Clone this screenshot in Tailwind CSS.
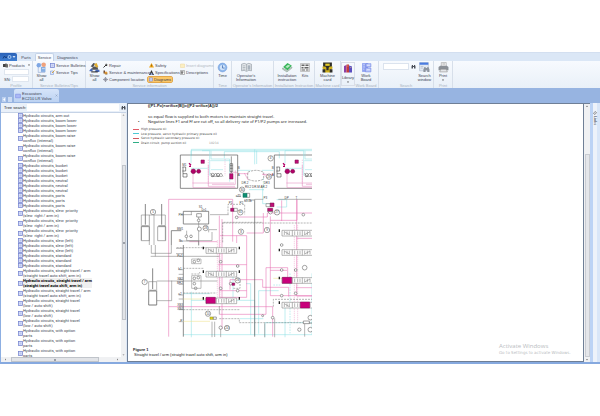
<!DOCTYPE html>
<html lang="en">
  <head>
    <meta charset="UTF-8">
    <title>EC210 LR Volvo | Service</title>
    <script src="https://cdn.jsdelivr.net/npm/@tailwindcss/browser@4"></script>
  </head>
  <body class="min-h-screen bg-white pt-[52px] font-['Liberation_Sans',Arial,sans-serif] text-[4px] leading-[5px] text-[#3c4452] overflow-hidden">

    <!-- Shared icons -->
    <svg class="hidden">
      <symbol id="doc" viewBox="0 0 10 10"><rect x="1" y="1" width="8" height="8" fill="#dfe6fb" stroke="#7482cf" stroke-width="1.5"/><path d="M3 4h4M3 6h4" stroke="#8694dd"/></symbol>
      <symbol id="bino" viewBox="0 0 10 10"><path d="M1 9V5l1-3h2v2h2V2h2l1 3v4H6V6H4v3z" fill="#4a4f58"/></symbol>
      <symbol id="excavator" viewBox="0 0 20 20"><path d="M3 8l5-6 4 1-5 6z" fill="#4d5058"/><path d="M7 8h8l2 6H5z" fill="#555"/><path d="M9 4l5-2 3 7-4 1z" fill="#e0ad32"/><path d="M1 15l4-4 2 6H1zM12 14h7v4h-8z" fill="#4668b8"/><path d="M4 18h12" stroke="#333" stroke-width="2"/></symbol>
    </svg>

    <header>
      <!-- Tabs -->
      <nav class="flex h-[9px] items-end bg-[#dbe7f6] border-t border-[#d3dff0]">
        <button class="h-[8px] w-[17px] rounded-tr-xs bg-linear-to-b from-[#2b62b8] to-[#3f7fd2] flex items-center justify-center" aria-label="Menu">
          <svg class="w-[14px] h-[6px]" viewBox="0 0 28 12"><path d="M2 9l3-5 3 4 3-4" stroke="#153d80" stroke-width="2" fill="none"/><circle cx="15" cy="6" r="3" fill="none" stroke="#a9cdf5" stroke-width="2"/><path d="M21 4h6l-3 4z" fill="#d6e7fb"/></svg>
        </button>
        <button class="h-[8px] ml-[2px] w-[14px]">Parts</button>
        <button class="h-[8px] ml-[2px] w-[19px] rounded-t-xs border border-b-0 border-[#c3d2e8] bg-[#f8fbff]">Service</button>
        <button class="h-[8px] ml-[3px] w-[21px]">Diagnostics</button>
      </nav>

      <!-- Ribbon -->
      <div class="flex h-[27px] bg-linear-to-b from-[#f7fafe] to-[#e9f0f8]">
        <section class="w-[33px] flex flex-col border-r border-[#d7dfea] pt-px">
          <button class="flex items-center gap-px pl-[3px] h-[6px]">
            <svg class="w-[5px] h-[5px]" viewBox="0 0 10 10"><path d="M0 2h6v6H0z" fill="#444"/><path d="M5 0l5 3v6H5z" fill="#6b6b6b"/></svg>
            Products
            <svg class="w-[2px] h-[2px] ml-[2px]" viewBox="0 0 4 4"><path d="M0 1h4L2 4z" fill="#555"/></svg>
          </button>
          <input type="text" aria-label="Product" class="ml-[4px] mt-px h-[6px] w-[25px] border border-[#dfe6ef] bg-white">
          <div class="flex items-center gap-[2px] pl-[4px] mt-px">
            <label for="sn" class="w-[6px]">SN:</label>
            <input id="sn" type="text" class="h-[6px] w-[17px] border border-[#dfe6ef] bg-white">
          </div>
          <div class="mt-auto text-center text-[#a9b2c0]">Profile</div>
        </section>

        <section class="w-[53px] flex flex-col border-r border-[#d7dfea] pt-px">
          <div class="flex gap-[3px] pl-[3px]">
            <button class="flex flex-col items-center w-[11px] leading-[4px]">
              <svg class="w-[11px] h-[11px] mb-px" viewBox="0 0 20 20"><path d="M4 4h9l3 3v12H4z" fill="#e4ecf9" stroke="#8fa6cf"/><circle cx="5" cy="6" r="4" fill="#7fa7e4"/><circle cx="14" cy="5" r="4" fill="#f0a27c"/><path d="M9 9h8v9H9z" fill="#86aee2"/><path d="M7 9v8M11 12h5" stroke="#fff"/></svg>
              Show<br>all
            </button>
            <div class="flex flex-col gap-[2px] pt-px">
              <button class="flex items-center gap-px whitespace-nowrap"><svg class="w-[5px] h-[5px] shrink-0"><use href="#doc"/></svg>Service Bulletins</button>
              <button class="flex items-center gap-px whitespace-nowrap"><svg class="w-[5px] h-[5px] shrink-0" viewBox="0 0 10 10"><path d="M1 2h6v7H1z" fill="#dbe6fa" stroke="#6d8bcd"/><path d="M4 6l5-5" stroke="#d9a441" stroke-width="2"/></svg>Service Tips</button>
            </div>
          </div>
          <div class="mt-auto text-center text-[#a9b2c0]">Service Bulletins/Tips</div>
        </section>

        <section class="w-[128px] flex flex-col border-r border-[#d7dfea] pt-px">
          <div class="flex pl-[3px]">
            <button class="flex flex-col items-center w-[11px] leading-[4px]">
              <svg class="w-[11px] h-[11px] mb-px"><use href="#excavator"/></svg>
              Show<br>all
            </button>
            <div class="flex flex-col gap-[2px] w-[48px] pt-px pl-[3px]">
              <button class="flex items-center gap-px whitespace-nowrap"><svg class="w-[5px] h-[5px]" viewBox="0 0 10 10"><path d="M1 9l5-5" stroke="#333" stroke-width="2"/><path d="M5 2l2-1v2h2l-1 3H5z" fill="#333"/></svg>Repair</button>
              <button class="flex items-center gap-px whitespace-nowrap"><svg class="w-[5px] h-[5px] shrink-0" viewBox="0 0 10 10"><path d="M1 1h3v6H1z" fill="#6c4a35"/><circle cx="6" cy="6" r="3" fill="#e39a35"/><path d="M5 8h4" stroke="#444"/></svg>Service &amp; maintenance</button>
              <button class="flex items-center gap-px whitespace-nowrap"><svg class="w-[5px] h-[5px] shrink-0" viewBox="0 0 10 10"><circle cx="5" cy="5" r="3" fill="none" stroke="#667"/><path d="M5 0v10M0 5h10" stroke="#667"/></svg>Component location</button>
            </div>
            <div class="flex flex-col items-start gap-[2px] w-[32px] pt-px">
              <button class="flex items-center gap-px px-px"><svg class="w-[5px] h-[5px]" viewBox="0 0 10 10"><path d="M5 0l5 9H0z" fill="#f2a81d"/><path d="M5 3v3M5 7v1" stroke="#5b3b00"/></svg>Safety</button>
              <button class="flex items-center gap-px px-px"><svg class="w-[5px] h-[5px]" viewBox="0 0 10 10"><path d="M5 0l5 10H7L5 5l-2 5H0z" fill="#333"/><path d="M2 7h6v2H2z" fill="#4a66a8"/></svg>Specifications</button>
              <button class="flex items-center gap-px px-px w-[24px] rounded-[1px] bg-[#fbc768] outline outline-[#e3a84b]"><svg class="w-[5px] h-[5px]"><use href="#doc"/></svg>Diagrams</button>
            </div>
            <div class="flex flex-col gap-[2px] pt-px">
              <button class="flex items-center gap-px whitespace-nowrap text-[#b3bac5]" disabled><svg class="w-[5px] h-[5px]" viewBox="0 0 10 10"><path d="M1 2h8v7H1z" fill="#fbeec2" stroke="#edd79a"/></svg>Insert diagrams</button>
              <button class="flex items-center gap-px whitespace-nowrap"><svg class="w-[5px] h-[5px]" viewBox="0 0 10 10"><path d="M1 1h8v8H1z" fill="#fff" stroke="#777"/><path d="M3 3h2v4H3zM6 4h2" stroke="#555" fill="#555"/></svg>Descriptions</button>
            </div>
          </div>
          <div class="mt-auto text-center text-[#a9b2c0]">Service information</div>
        </section>

        <section class="w-[18px] flex flex-col items-center border-r border-[#d7dfea] pt-px">
          <button class="flex flex-col items-center leading-[4px]">
            <svg class="w-[11px] h-[11px] mb-px" viewBox="0 0 20 20"><circle cx="10" cy="10" r="8" fill="#8bb5ea" stroke="#6e9bdb"/><circle cx="10" cy="10" r="5" fill="#cfe2f9"/><path d="M10 6v5h4" stroke="#4a74b5" stroke-width="1.5" fill="none"/></svg>
            Time
          </button>
          <div class="mt-auto text-[#a9b2c0]">Time</div>
        </section>

        <section class="w-[42px] flex flex-col border-r border-[#d7dfea] pt-px">
          <button class="flex flex-col items-center w-[28px] leading-[4px]">
            <svg class="w-[11px] h-[11px] mb-px" viewBox="0 0 20 20"><path d="M1 4q5-3 9 0q4-3 9 0v12q-5-2-9 1q-4-3-9-1z" fill="#e6e9ec" stroke="#7d8791"/><path d="M10 4v12M3 7h5M3 10h5M3 13h5" stroke="#8a949e"/><path d="M12 6h5v8h-5z" fill="#a9b3bd"/></svg>
            Operator's<br>Information
          </button>
          <div class="mt-auto text-center text-[#a9b2c0] whitespace-nowrap">Operator's Information</div>
        </section>

        <section class="w-[41px] flex flex-col border-r border-[#d7dfea] pt-px">
          <div class="flex">
            <button class="flex flex-col items-center w-[26px] leading-[4px]">
              <svg class="w-[11px] h-[11px] mb-px" viewBox="0 0 20 20"><path d="M1 13l8 5 9-7v-2l-9 6-8-4z" fill="#ccd3cf" stroke="#7f9b87"/><path d="M2 9l8-7 8 5-8 8z" fill="#39b55a"/><path d="M6 9l5-4 4 2-5 4z" fill="#b6ebc0"/></svg>
              Installation<br>instruction
            </button>
            <button class="flex flex-col items-center w-[10px] leading-[4px]">
              <svg class="w-[10px] h-[11px] mb-px" viewBox="0 0 20 20"><path d="M1 2h18v16H1z" fill="#f1f1f1" stroke="#999"/><path d="M3 4h6v3H3zM11 4h6v3h-6zM3 9h4v3H3zM9 9h8v3H9zM3 14h7v2H3zM12 14h5v2h-5z" fill="#666"/></svg>
              Kits
            </button>
          </div>
          <div class="mt-auto text-center text-[#a9b2c0] whitespace-nowrap">Installation Instruction</div>
        </section>

        <section class="w-[26px] flex flex-col items-center border-r border-[#d7dfea] pt-px">
          <button class="flex flex-col items-center leading-[4px]">
            <svg class="w-[11px] h-[11px] mb-px" viewBox="0 0 20 20"><path d="M2 1h16v7l-3 3H5L2 8z" fill="#2e2e2a"/><path d="M6 3h8v4H6z" fill="#e2cb2c"/><path d="M1 8h5l4 4 4-4h5v4l-4 3v4H5v-4l-4-3z" fill="#cdaf1c"/><path d="M1 13h5v6H1zM14 13h5v6h-5zM8 9h4v6H8z" fill="#2e2e2a"/></svg>
            Machine<br>card
          </button>
          <div class="mt-auto text-[#a9b2c0] whitespace-nowrap">Machine card</div>
        </section>

        <section class="w-[38px] flex border-r border-[#d7dfea] pt-px">
          <button class="flex flex-col items-center w-[14px] h-[24px] border border-[#d9dee8] leading-[4px]">
            <svg class="w-[10px] h-[11px] mb-[2px]" viewBox="0 0 20 20"><path d="M2 5l5-2v15H2z" fill="#8b3fa5"/><path d="M7 2h5v16H7z" fill="#c33b3b"/><path d="M12 4l6 2v12h-6z" fill="#5b4fc0"/><path d="M8 5h3M14 8h3" stroke="#f0c67a"/></svg>
            Library
            <svg class="w-[2px] h-[2px] mt-px" viewBox="0 0 4 4"><path d="M0 1h4L2 4z" fill="#555"/></svg>
          </button>
          <div class="flex flex-col items-center w-[22px]">
            <button class="flex flex-col items-center leading-[4px]">
              <svg class="w-[11px] h-[11px] mb-px" viewBox="0 0 20 20"><path d="M2 2h11v16H2z" fill="#90a3f2"/><path d="M9 3h9v6H9zM8 11h10v7H8z" fill="#b9c6fb" stroke="#6d81e0"/><path d="M4 5h3M4 9h3M4 13h2M11 6h5M11 14h5" stroke="#fff"/></svg>
              Work<br>Board
            </button>
            <div class="mt-auto text-[#a9b2c0] whitespace-nowrap">Work Board</div>
          </div>
        </section>

        <section class="w-[55px] flex flex-col border-r border-[#d7dfea] pt-px">
          <div class="flex pl-[4px]">
            <input type="text" aria-label="Search" class="h-[7px] w-[26px] mt-px border border-[#dbe3ee] bg-white">
            <button aria-label="Find" class="ml-[2px] w-[5px] h-[9px] flex items-center"><svg class="w-[5px] h-[5px]"><use href="#bino"/></svg></button>
            <button class="flex flex-col items-center w-[17px] leading-[4px]">
              <svg class="w-[11px] h-[11px] mb-px" viewBox="0 0 20 20"><path d="M1 1h16v15H1z" fill="#e3e9f2" stroke="#a5b3c9"/><path d="M1 1h16v4H1z" fill="#4a7be0"/><path d="M3 8h5M3 11h4" stroke="#9aa7ba"/><path d="M8 18v-5l2-4h2v2h3V9h2l2 4v5h-4v-3h-3v3z" fill="#8d949f"/></svg>
              Search<br>window
            </button>
          </div>
          <div class="mt-auto text-center text-[#a9b2c0]">Search</div>
        </section>

        <section class="w-[19px] flex flex-col items-center border-r border-[#d7dfea] pt-px">
          <button class="flex flex-col items-center leading-[4px]">
            <svg class="w-[11px] h-[11px] mb-px" viewBox="0 0 20 20"><path d="M6 1h9v8H6z" fill="#f6f6f6" stroke="#999"/><path d="M1 9l3-2h12l3 2v6H1z" fill="#8b9097"/><path d="M5 13h10l2 5H3z" fill="#e4e6e9" stroke="#888"/><path d="M8 3h5M8 5h5" stroke="#aaa"/></svg>
            Print
            <svg class="w-[2px] h-[2px] mt-px" viewBox="0 0 4 4"><path d="M0 1h4L2 4z" fill="#555"/></svg>
          </button>
          <div class="mt-auto text-[#a9b2c0]">Print</div>
        </section>
      </div>

      <!-- Open machine -->
      <div class="flex h-[15px] items-end gap-[2px] bg-[#97b4e1] pl-[2px] pb-px">
        <button aria-label="Previous" class="w-[4px] h-[5px] bg-[#bdd1f0] flex items-center justify-center"><svg class="w-[2px] h-[3px]" viewBox="0 0 4 6"><path d="M4 0v6L0 3z" fill="#fff"/></svg></button>
        <button aria-label="New" class="w-[4px] h-[5px] bg-[#c9daf4]"></button>
        <div class="flex items-center gap-px w-[45px] h-[13px] bg-linear-to-b from-[#d6e4f9] to-[#bcd2f2] rounded-t-xs px-px">
          <svg class="w-[6px] h-[6px]" viewBox="0 0 10 10"><path d="M1 2h8v6H1z" fill="#aab8f6" stroke="#7d8fe6"/></svg>
          <span class="leading-[5px] whitespace-nowrap">Excavators<br>EC210 LR Volvo</span>
          <button aria-label="Close" class="ml-auto w-[3px] h-[4px] flex"><svg class="w-[3px] h-[3px]" viewBox="0 0 6 6"><path d="M1 1l4 4M5 1L1 5" stroke="#8499bb"/></svg></button>
        </div>
      </div>
    </header>

    <main class="flex border-b-2 border-[#86a9df] bg-[#dce7f6]">
      <!-- Tree -->
      <aside class="w-[127px] shrink-0 flex flex-col border-l border-[#8dafe2] pr-px">
        <div class="flex items-center gap-px h-[9px] pl-[3px] bg-[#e9f0f9] text-[#222]">
          <label for="tree-search" class="whitespace-nowrap">Tree search:</label>
          <input id="tree-search" type="text" class="flex-1 min-w-0 h-[7px] bg-white px-px">
          <button aria-label="Find in tree" class="w-[6px] pl-px flex"><svg class="w-[5px] h-[5px]"><use href="#bino"/></svg></button>
        </div>
        <div class="flex h-[245px] bg-white border-t border-[#c6d3e6]">
          <ul id="tree" class="flex-1 overflow-hidden pl-[17px] font-[Roboto,sans-serif]"></ul>
          <div class="w-[5px] flex flex-col items-center bg-[#f0f1f3]">
            <svg class="w-[3px] h-[4px]" viewBox="0 0 6 8"><path d="M1 5h4L3 3z" fill="#777"/></svg>
            <div class="mt-[48px] w-[4px] h-[155px] border border-[#c0c4ca] bg-[#e2e4e8] flex items-center justify-center"><span class="w-[2px] h-[2px] bg-[#9a9fa8]"></span></div>
            <svg class="mt-auto w-[3px] h-[4px]" viewBox="0 0 6 8"><path d="M1 3h4L3 5z" fill="#777"/></svg>
          </div>
        </div>
        <div class="flex items-center h-[5px] bg-[#f0f1f3] pl-[3px]">
          <svg class="w-[3px] h-[3px]" viewBox="0 0 6 6"><path d="M4 1v4L2 3z" fill="#666"/></svg>
          <div class="ml-[4px] w-[88px] h-[5px] border border-[#c0c4ca] bg-[#e2e4e8] flex items-center justify-center"><span class="w-[2px] h-[2px] bg-[#9a9fa8]"></span></div>
          <svg class="ml-auto mr-[7px] w-[3px] h-[3px]" viewBox="0 0 6 6"><path d="M2 1v4l2-2z" fill="#666"/></svg>
        </div>
      </aside>

      <!-- Document -->
      <article class="flex-1 min-w-0 flex flex-col bg-white border border-[#6f7f96] pl-[2px] text-[#222]">
        <div class="pl-[18px] font-['Noto_Sans',sans-serif]">
          <p class="font-bold leading-[4px] font-['Liberation_Sans',Arial,sans-serif]">((P1-Po)×orifice(B))=((P2·orifice(A))/2</p>
          <p class="mt-[6px]">so equal flow is supplied to both motors to maintain straight travel.</p>
          <p class="flex"><span class="-ml-[10px] w-[10px]">•</span>Negative lines F1 and Ff are cut off, so all delivery rate of P1/P2 pumps are increased.</p>
        </div>
        <ul class="mt-[3px] pl-[3px] text-[3px] leading-[4px] text-[#444] font-['DejaVu_Sans',sans-serif]">
          <li class="flex items-center gap-[2px] h-[4px]"><span class="w-[6px] h-px bg-[#e05a66]"></span>High pressure oil</li>
          <li class="flex items-center gap-[2px] h-[5px]"><span class="w-[6px] h-px bg-[#4cc9d4]"></span>Low pressure, servo hydraulic primary pressure oil</li>
          <li class="flex items-center gap-[2px] h-[4px]"><span class="w-[6px] h-px bg-[#d0585f]"></span>Servo hydraulic secondary pressure oil</li>
          <li class="flex items-center gap-[2px] h-[5px]"><span class="w-[6px] h-px bg-[#2fae86]"></span><span class="w-[66px]">Drain circuit, pump suction oil</span><span class="text-[#999]">10234</span></li>
        </ul>
        <svg class="w-[190px] h-[193px]" viewBox="0 0 570 579" fill="none" stroke-width="1.6" role="img" aria-label="Hydraulic circuit">
          <defs>
            <g id="valve">
              <path d="M0 6h92v17H0zM31 6v17M61 6v17" fill="#fff" stroke="#777"/>
              <path d="M7 9v11M15 9v11M22 9v11M7 10l15 9M38 9v11M47 9v11M54 9v11M68 9v11M76 9v11M84 9v11M68 19l16-9" stroke="#777"/>
              <path d="M-8 3v8M100 3v8" stroke="#222" stroke-width="4"/>
            </g>
            <g id="motor">
              <path d="M0 30h172v100H0z" stroke="#555" stroke-width="2"/>
              <path d="M32 55V17h56v75M32 70h50M92 17v25h56v68M90 47h60M92 74h36" stroke="#92dfe2"/>
              <path d="M38 80v48h128M84 60v64h80M95 118h70V76M36 114h125M46 80h14M150 82h20" stroke="#e58abf"/>
              <circle cx="39" cy="79" r="7" fill="#b20067" stroke="#73104b"/><circle cx="55" cy="79" r="6" fill="#b20067" stroke="#73104b"/>
              <path d="M62 45h10v10H62zM148 86h10v16h-10z" fill="#c00d76" stroke="#7a1250"/>
              <path d="M26 55l6 6M26 64h6" stroke="#b20067" stroke-width="4"/>
              <path d="M6 66h10v12H6M8 86h12v10H8M8 66v30" stroke="#333"/>
              <path d="M90 84l8 10l8-10l8 10l8-10l6 10M92 94h34" stroke="#666"/><circle cx="97" cy="90" r="5" stroke="#555"/><circle cx="113" cy="90" r="5" stroke="#555"/>
              <path d="M153 34v50M149 56h8v24h-8zM149 62h8M149 70h8" stroke="#444"/>
              <path d="M84 44v78M134 42v50" stroke="#e9a5ce" stroke-dasharray="4 3"/>
            </g>
            <g id="cylinder">
              <path d="M0 68h24v42H0z" fill="#fff" stroke="#666"/><path d="M12 0v62" stroke="#888" stroke-width="3"/><path d="M2 64h20v5H2z" fill="#999"/>
            </g>
            <clipPath id="sheet"><rect width="546" height="577"/></clipPath>
          </defs>
          <g clip-path="url(#sheet)">
            <!-- pilot lines -->
            <g stroke="#8adfe3">
              <path d="M184 32V13h362M216 17h330M374 13v45M380 17v40M283 40V20h165v20"/>
              <path d="M322 76h40M396 76h34M357 134h43M398 130v46h20M440 186h30v-22h-30"/>
              <path d="M184 440v145M160 569h386V385M184 466h190v103M160 446h80M234 380h75v76M348 416h14v153M386 566V437h60M405 585v-52h140M465 585v-110M330 521h70"/>
              <path d="M400 100v36M430 420h24M480 385v180" stroke-dasharray="5 3"/>
            </g>
            <path d="M353 82q26-12 48 0v20q-24 12-48 0z" stroke="#666" stroke-dasharray="7 3"/>
            <use href="#motor" x="151"/>
            <use href="#motor" x="433"/>
            <path d="M320 86h35M396 88h36M355 106l-12-22M400 86l16 17" stroke="#e777b5"/>

            <!-- pressure lines -->
            <g stroke="#e468ad">
              <path d="M116 575V163h192v30M308 180v110M268 212v245h82V272h-80M316 216h96v-12h134M400 204v60h-50M421 214v238h125M421 226h80V163M500 163v290h46M276 222v330M262 290h-84M320 272v22M408 508V368h65v36M421 376h50M265 359h85M300 404h98v23h78v28M300 404v30M268 437h82M160 485h268v90M116 485h44M268 508h140M500 280h46M455 166v62M498 428h48"/>
              <path d="M262 285v180M270 285v180M493 240v290M503 240v290" stroke="#edabd0" stroke-dasharray="4 2"/>
            </g>

            <!-- tank and body lines -->
            <g stroke="#777">
              <path d="M160 575V300M160 235v-36h76v38h-76zM124 300v-43h30M374 163v412" stroke="#555" stroke-width="2"/>
              <path d="M374 163h26M62 334h206M76 334V300M80 408h182M80 467h45v-60M206 300V206M184 199v10M170 257v30h76v-26M240 209h56M268 508v-25M154 209h32M445 163h100M236 262v-8h25M150 288h56v14"/>
              <path d="M278 292v-60h120M278 234h270M294 208v-30h50v30M140 308h90M160 370h60M184 387h25v-6M310 430h20v-22M160 444h100M430 485v-22h116M268 521h60v12h218M160 494h170" stroke-dasharray="6 3"/>
              <path d="M138 310h22M138 326h22M146 374h14M146 388h14M146 403h14M146 418h14M146 450h14M146 462h14M146 485h14M146 494h14M146 530h12"/>
              <path d="M246 530v48M254 530v46M272 548v30M404 535v45M434 520v60M524 535v40M520 535h26"/>
            </g>
            <path d="M160 462h70M160 529h80M430 400h26" stroke="#f0e08a"/>

            <!-- cylinders -->
            <use href="#cylinder" x="34" y="177"/><use href="#cylinder" x="83" y="177"/>
            <path d="M34 210h72M58 210v90M72 210v90M64 300v25h60v-25M34 210v76M106 210v76" stroke="#777"/>
            <use href="#cylinder" x="56" y="370"/>
            <path d="M80 480h-24v-70h24z" stroke="#777"/>

            <!-- spool valves -->
            <use href="#valve" x="228" y="302"/>
            <use href="#valve" x="228" y="373"/>
            <use href="#valve" x="228" y="453"/>
            <use href="#valve" x="456" y="250"/>
            <use href="#valve" x="456" y="308"/>
            <use href="#valve" x="456" y="392"/>
            <use href="#valve" x="456" y="466"/>
            <path d="M228 457h28v18h-28zM457 397h28v18h-28zM511 471h28v18h-28z" fill="#c9007b" stroke="#8a0c59"/>
            <path d="M302 190h10v9h-10zM306 414h8v7h-8zM420 174h12v11h-12zM413 190h15v9h-15z" fill="#c00d76" stroke="#7a1250"/>
            <path d="M408 176h12v9h-12zM312 190h10v9h-10z" fill="#fff" stroke="#666"/>
            <path d="M339 145h12v12h-12z" fill="#0f8f74" stroke="#0a6a55"/><path d="M351 145h8v12h-8M320 154h12M342 165h30" stroke="#555"/>
            <path d="M240 516h10v7h-10z" fill="#e6dc1e" stroke="#8d8820"/><path d="M250 516h9v7h-9zM520 528h18v8h-18zM200 206h14v10h-14zM413 200l8 8l8-8z" fill="#fff" stroke="#555"/>

            <!-- check valves and orifices -->
            <g fill="#fff" stroke="#555">
              <circle cx="320" cy="217" r="4"/><circle cx="520" cy="209" r="4"/><circle cx="169" cy="274" r="4"/><circle cx="183" cy="274" r="4"/><circle cx="208" cy="252" r="6"/><circle cx="206" cy="226" r="4"/>
              <circle cx="193" cy="350" r="4"/><circle cx="205" cy="346" r="4"/><circle cx="193" cy="400" r="4"/><circle cx="205" cy="398" r="4"/><circle cx="193" cy="416" r="4"/><circle cx="197" cy="430" r="4"/>
              <circle cx="323" cy="363" r="4"/><circle cx="323" cy="437" r="4"/><circle cx="272" cy="350" r="4"/><circle cx="272" cy="430" r="4"/><circle cx="302" cy="416" r="4"/><circle cx="455" cy="300" r="4"/><circle cx="455" cy="375" r="4"/><circle cx="455" cy="452" r="4"/><circle cx="497" cy="375" r="4"/><circle cx="497" cy="445" r="4"/><circle cx="272" cy="548" r="5"/><circle cx="508" cy="554" r="5"/><circle cx="428" cy="518" r="4"/><circle cx="398" cy="512" r="3"/>
            </g>
            <path d="M185 342h28v14h-28zM185 392h28v38h-28z" stroke="#888"/>

            <!-- callouts -->
            <g stroke="#555" fill="#fff">
              <circle cx="69" cy="201" r="8"/><circle cx="44" cy="411" r="8"/><circle cx="422" cy="40" r="8"/><circle cx="336" cy="134" r="8"/><circle cx="417" cy="95" r="8"/><circle cx="227" cy="249" r="8"/><circle cx="331" cy="202" r="8"/><circle cx="441" cy="202" r="8"/><circle cx="333" cy="260" r="8"/><circle cx="411" cy="255" r="8"/><circle cx="323" cy="406" r="8"/><circle cx="234" cy="506" r="8"/><circle cx="291" cy="549" r="8"/><circle cx="524" cy="368" r="7"/><circle cx="541" cy="518" r="7"/><circle cx="541" cy="554" r="7"/>
            </g>
            <g fill="#444" font-size="9" font-family="Liberation Sans, Arial, sans-serif" text-anchor="middle">
              <text x="69" y="204">5</text><text x="44" y="414">7</text><text x="422" y="43">4</text><text x="336" y="137">30</text><text x="417" y="98">29</text><text x="227" y="252">28</text><text x="331" y="205">31</text><text x="441" y="205">27</text><text x="333" y="263">8</text><text x="411" y="258">9</text><text x="323" y="409">26</text><text x="234" y="509">10</text><text x="291" y="552">24</text>
              <text x="345" y="116">DR.2</text><text x="410" y="116">DR3</text><text x="378" y="130">RV.2 DR.M AR.2</text><text x="325" y="157">aT5</text><text x="354" y="170">a1.2b</text><text x="302" y="178">P1</text><text x="334" y="178">P2</text><text x="406" y="161">P3</text><text x="470" y="161">DP</text><text x="499" y="161">T</text><text x="326" y="73">B</text><text x="326" y="94">A</text><text x="428" y="73">B</text><text x="428" y="94">A</text><text x="212" y="189">S1</text><text x="222" y="198">Dr1</text><text x="152" y="213">PH</text><text x="150" y="255">BM1</text><text x="152" y="292">Bs</text><text x="150" y="336">Pa1</text><text x="150" y="374">b1</text><text x="150" y="404">XB2</text><text x="150" y="418">BR2</text><text x="150" y="450">a2</text><text x="150" y="484">XB3</text><text x="150" y="496">XB4</text><text x="154" y="532">P</text><text x="163" y="64">M1</text>
            </g>
          </g>
        </svg>
        <div class="mt-[5px] pl-[3px] flex items-end">
          <p class="flex-1 pb-[4px]"><b>Figure 1</b><br>&nbsp;Straight travel / arm (straight travel auto shift, arm in)</p>
          <div class="w-[84px] h-[18px] text-[#b9bcc1] whitespace-nowrap">
            <div class="text-[6px] leading-[6px] font-['Open_Sans',sans-serif]">Activate Windows</div>
            <div class="leading-[7px] font-['DejaVu_Sans',sans-serif]">Go to Settings to activate Windows.</div>
          </div>
        </div>
      </article>

      <div class="w-[6px] shrink-0 flex flex-col items-center bg-[#f0f1f3] border-t border-[#6f7f96]">
        <svg class="w-[4px] h-[5px]" viewBox="0 0 8 10"><path d="M2 6h4L4 3z" fill="#777"/></svg>
        <div class="flex-1 mt-[45px] w-[5px] border border-[#c9ccd2] bg-[#e4e6ea]"></div>
        <svg class="w-[4px] h-[5px]" viewBox="0 0 8 10"><path d="M2 4h4L4 7z" fill="#777"/></svg>
      </div>
      <div class="w-[10px] shrink-0 border-x-3 border-[#bcd3f5] border-r-[#d9e6f8] bg-[#edf2fa] flex justify-center pt-[8px]">
        <button class="h-[17px] [writing-mode:vertical-rl] flex items-center gap-px"><svg class="w-[4px] h-[4px]" viewBox="0 0 8 8"><path d="M1 5l3-4 3 2-3 4z" fill="none" stroke="#777" stroke-width="1.5"/></svg>Links</button>
      </div>
    </main>

    <script>
      const circuits = [
        ["Hydraulic circuits, arm out"],
        ["Hydraulic circuits, boom lower"],
        ["Hydraulic circuits, boom lower"],
        ["Hydraulic circuits, boom lower"],
        ["Hydraulic circuits, boom raise", "conflux (internal)"],
        ["Hydraulic circuits, boom raise", "conflux (internal)"],
        ["Hydraulic circuits, boom raise", "conflux (internal)"],
        ["Hydraulic circuits, bucket"],
        ["Hydraulic circuits, bucket"],
        ["Hydraulic circuits, bucket"],
        ["Hydraulic circuits, neutral"],
        ["Hydraulic circuits, neutral"],
        ["Hydraulic circuits, neutral"],
        ["Hydraulic circuits, ports"],
        ["Hydraulic circuits, ports"],
        ["Hydraulic circuits, ports"],
        ["Hydraulic circuits, slew  priority", "(slew  right / arm in)"],
        ["Hydraulic circuits, slew  priority", "(slew  right / arm in)"],
        ["Hydraulic circuits, slew  priority", "(slew  right / arm in)"],
        ["Hydraulic circuits, slew (left)"],
        ["Hydraulic circuits, slew (left)"],
        ["Hydraulic circuits, slew (left)"],
        ["Hydraulic circuits, standard"],
        ["Hydraulic circuits, standard"],
        ["Hydraulic circuits, standard"],
        ["Hydraulic circuits, straight travel / arm", "(straight travel auto shift, arm in)"],
        ["Hydraulic circuits, straight travel / arm", "(straight travel auto shift, arm in)"],
        ["Hydraulic circuits, straight travel / arm", "(straight travel auto shift, arm in)"],
        ["Hydraulic circuits, straight travel", "(low / auto shift)"],
        ["Hydraulic circuits, straight travel", "(low / auto shift)"],
        ["Hydraulic circuits, straight travel", "(low / auto shift)"],
        ["Hydraulic circuits, with option", "parts"],
        ["Hydraulic circuits, with option", "parts"],
        ["Hydraulic circuits, with option", "parts"],
      ];
      const selected = 26;

      document.getElementById("tree").innerHTML = circuits.map((lines, i) => `
        <li class="flex items-center ${i === selected ? "font-bold text-black" : ""}">
          <svg class="w-[5px] h-[5px] shrink-0"><use href="#doc"/></svg>
          <span class="whitespace-pre ${i === selected ? "bg-[#f0f0f0]" : ""}">${lines.join("<br>")}</span>
        </li>
      `).join("");
    </script>
  </body>
</html>
